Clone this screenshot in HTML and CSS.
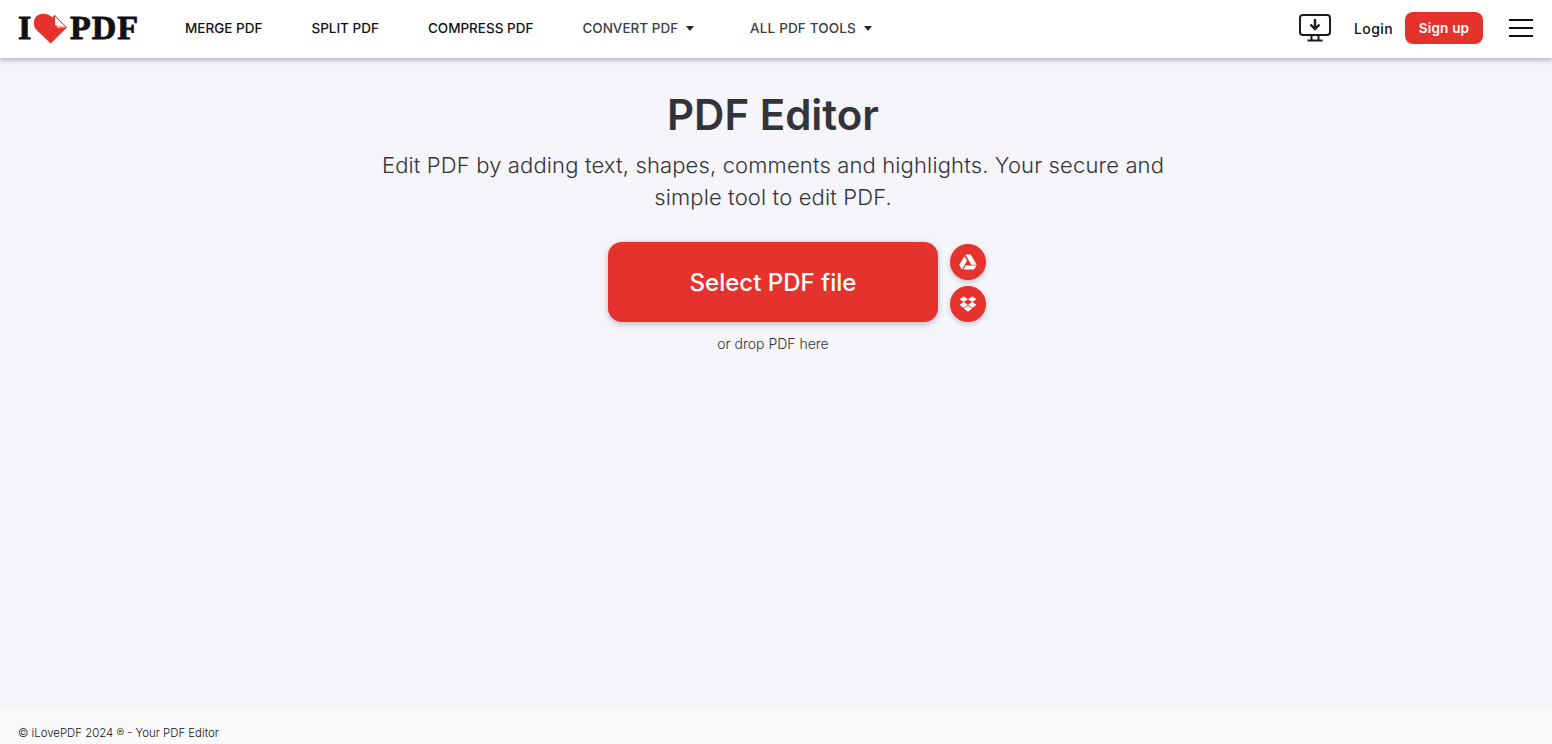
FILE: index.html
```html
<!DOCTYPE html>
<html lang="en">
<head>
<meta charset="utf-8">
<title>PDF Editor</title>
<link rel="stylesheet" href="styles.css">
</head>
<body>
<header class="header">
  <a class="logo">
    <span class="logo-text logo-i">I</span>
    <svg class="logo-heart" width="35" height="31" viewBox="0 0 35 31"><path d="M17.700 30.500 3 16.500C-1 11 .5 2 9 .8 13 .3 17 2 19.500 4.200L21.500 1.800 34 14.500Z" fill="#e5322d"/><path d="M22 3.600 32.600 14.300 22 12.200Z" fill="#fff"/><path d="M22 12.200 32.600 14.300 25.500 15.200Z" fill="#f3aaa7"/></svg>
    <span class="logo-text">PDF</span>
  </a>
  <nav class="nav">
    <a class="nav-link">MERGE PDF</a>
    <a class="nav-link">SPLIT PDF</a>
    <a class="nav-link">COMPRESS PDF</a>
    <a class="nav-link nav-muted nav-convert">CONVERT PDF<i class="caret"></i></a>
    <a class="nav-link nav-muted nav-all">ALL PDF TOOLS<i class="caret"></i></a>
  </nav>
  <div class="actions">
    <svg class="desktop" width="32" height="28" viewBox="0 0 32 28" fill="none" stroke="#1b1b1f"><rect x="1" y="1" width="30" height="20" rx="3" stroke-width="2"/><path d="M16 5v10M11.500 10.500 16 15l4.500-4.500" stroke-width="2.400"/><path d="M12.500 21v5M19.500 21v5M8.500 26.500h15" stroke-width="2"/></svg>
    <a class="login">Login</a>
    <a class="signup">Sign up</a>
    <div class="burger"><span></span><span></span><span></span></div>
  </div>
</header>
<main class="main">
  <h1 class="title">PDF Editor</h1>
  <p class="subtitle">Edit PDF by adding text, shapes, comments and highlights. Your secure and simple tool to edit PDF.</p>
  <div class="upload">
    <div class="upload-col">
      <a class="select">Select PDF file</a>
      <span class="drop">or drop PDF here</span>
    </div>
    <div class="clouds">
      <a class="cloud"><svg width="18" height="16" viewBox="0 0 18 16" fill="#fff"><path d="M6.300 0.500h5.400l6 10.200h-5.400z"/><path d="M5.300 2.200 8 6.800 3 15.500 0.300 10.900z"/><path d="M6.700 11.400h10.900L15 15.500H4.300z"/></svg></a>
      <a class="cloud"><svg width="18" height="17" viewBox="0 0 18 17" fill="#fff"><path d="M4.700 0.500 9 3.300 4.700 6.100.400 3.300z"/><path d="M13.300 0.500 17.600 3.300 13.300 6.100 9 3.300z"/><path d="M4.700 6.100 9 8.900 4.700 11.700.400 8.900z"/><path d="M13.300 6.100 17.600 8.900 13.300 11.700 9 8.900z"/><path d="M4.800 12.600 9 9.900l4.200 2.700L9 15.800z"/></svg></a>
    </div>
  </div>
</main>
<footer class="footer">© iLovePDF 2024 ® - Your PDF Editor</footer>
</body>
</html>
```
FILE: styles.css
```css
* { box-sizing: border-box; }
html, body { height: 100%; }
body {
  margin: 0;
  display: flex;
  flex-direction: column;
  height: 744px;
  overflow: hidden;
  background: #f5f5fa;
  color: #33333b;
  font-family: Inter, Roboto, "Liberation Sans", sans-serif;
}
.header {
  flex: none;
  height: 58px;
  background: #fff;
  display: flex;
  align-items: center;
  padding: 0 19px 2px 17px;
  box-shadow: 0 2px 5px rgba(72, 72, 92, .4);
  position: relative;
}
.logo { display: flex; align-items: center; width: 168px; }
.logo-text {
  font-family: "Liberation Serif", serif;
  font-weight: 700;
  font-size: 34px;
  line-height: 30px;
  color: #111;
  -webkit-text-stroke: .9px #111;
  letter-spacing: 1px;
}
.logo-i { width: 16px; padding-left: 1px; }
.logo-heart { margin: 1px 2px 0 0; flex: none; }
.nav { display: flex; align-items: center; flex: 1; gap: 49px; }
.nav-link {
  font-size: 13.500px;
  font-weight: 500;
  color: #111;
  white-space: nowrap;
  display: flex;
  align-items: center;
}
.nav-muted { color: #383e45; }
.nav-convert { margin-right: 7px; }
.nav-all { letter-spacing: .15px; }
.caret {
  margin-left: 8px;
  width: 0;
  height: 0;
  border-left: 4.500px solid transparent;
  border-right: 4.500px solid transparent;
  border-top: 5px solid #26262c;
}
.actions { display: flex; align-items: center; }
.desktop { margin-right: 23px; }
.login { font-size: 14px; font-weight: 500; color: #111; margin-right: 12px; letter-spacing: .4px; }
.signup {
  width: 78px;
  height: 32px;
  border-radius: 8px;
  background: #e5322d;
  color: #fff;
  font-size: 13.500px;
  font-weight: 600;
  letter-spacing: .2px;
  display: flex;
  align-items: center;
  justify-content: center;
  margin-right: 26px;
}
.burger { width: 24px; display: flex; flex-direction: column; gap: 6px; }
.burger span { height: 2px; background: #111; }
.main {
  flex: 1;
  min-height: 0;
  display: flex;
  flex-direction: column;
  align-items: center;
  padding-right: 6px;
}
.title {
  margin: 34px 0 0;
  font-size: 42px;
  line-height: 46px;
  font-weight: 600;
  color: #33333b;
}
.subtitle {
  margin: 11px 0 0;
  width: 800px;
  text-align: center;
  font-size: 22px;
  line-height: 32px;
  font-weight: 300;
  letter-spacing: .14px;
  color: #33333b;
}
.upload { margin-top: 29px; display: flex; align-items: flex-start; padding-left: 48px; }
.upload-col { display: flex; flex-direction: column; align-items: center; }
.select {
  width: 330px;
  height: 80px;
  border-radius: 14px;
  background: #e5322d;
  color: #fff;
  font-size: 24px;
  font-weight: 500;
  display: flex;
  align-items: center;
  justify-content: center;
  box-shadow: 0 2px 6px rgba(72, 72, 92, .35);
}
.drop { margin-top: 12px; font-size: 14px; line-height: 20px; font-weight: 300; color: #33333b; }
.clouds { margin: 2px 0 0 12px; display: flex; flex-direction: column; gap: 6px; }
.cloud {
  width: 36px;
  height: 36px;
  border-radius: 50%;
  background: #e5322d;
  display: flex;
  align-items: center;
  justify-content: center;
  box-shadow: 0 2px 5px rgba(72, 72, 92, .3);
}
.footer {
  flex: none;
  height: 34px;
  background: #fafafc;
  padding: 15px 0 0 18px;
  font-size: 11.400px;
  line-height: 16px;
  font-weight: 300;
  color: #111;
}
```
